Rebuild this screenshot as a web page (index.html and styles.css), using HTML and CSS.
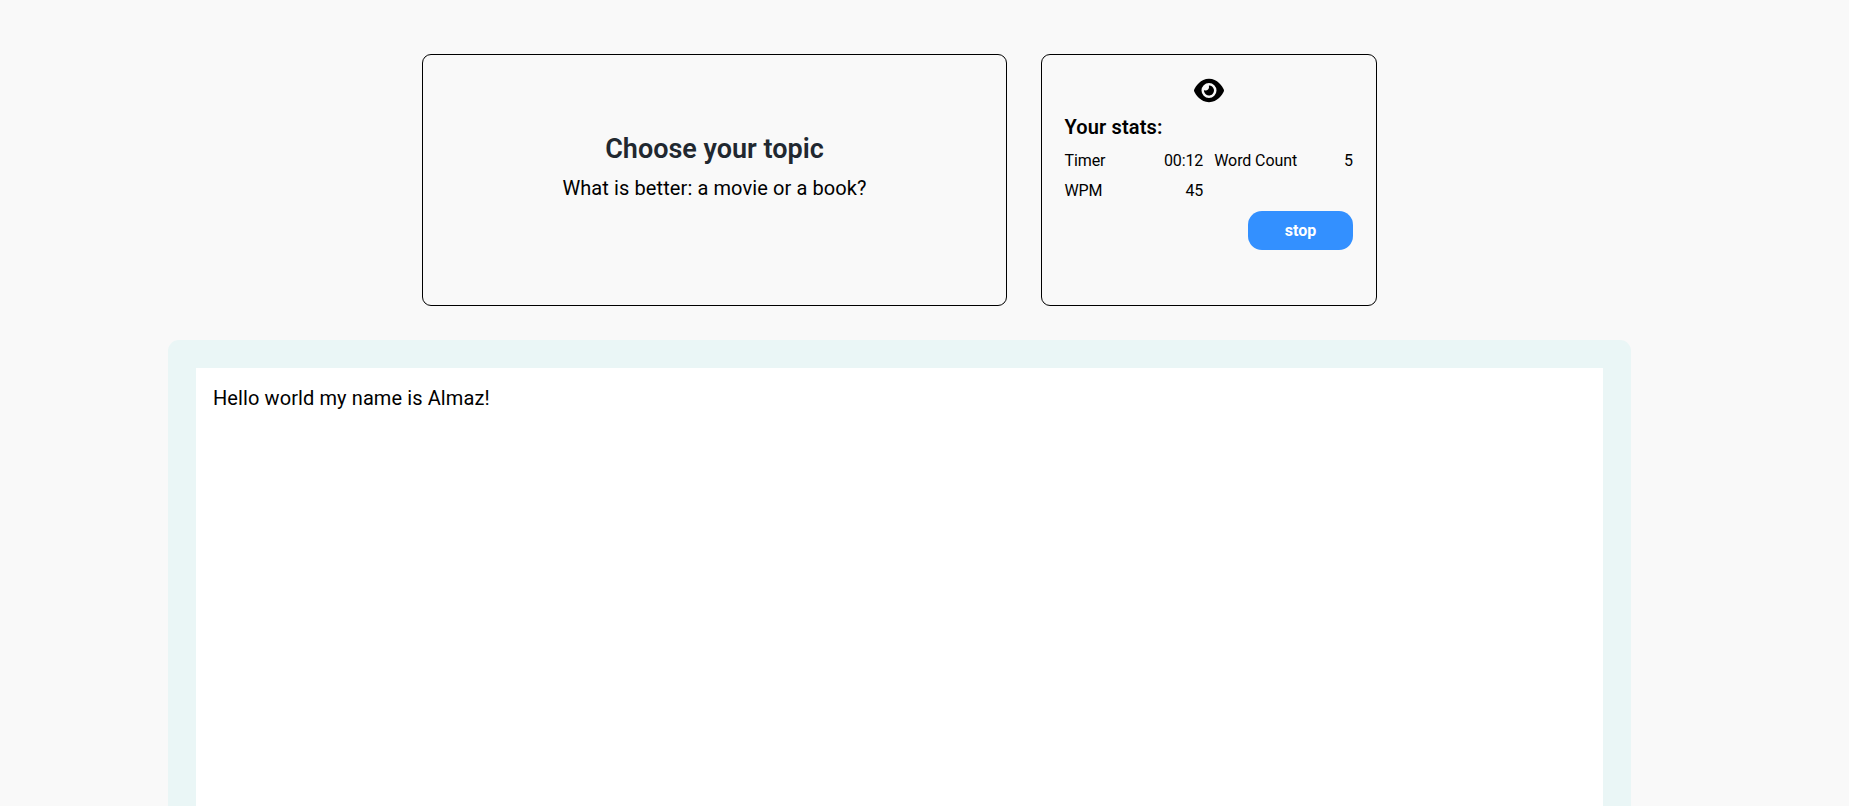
FILE: index.html
```html
<!DOCTYPE html>
<html lang="en">
<head>
<meta charset="utf-8">
<title>Writing practice</title>
<link rel="stylesheet" href="styles.css">
</head>
<body>
<main class="page">
  <div class="top">
    <section class="card topic">
      <h1 class="topic-title">Choose your topic</h1>
      <p class="topic-text">What is better: a movie or a book?</p>
    </section>
    <section class="card stats">
      <svg class="eye" viewBox="0 0 576 512" aria-hidden="true"><path d="M288 32c-80.8 0-145.5 36.800-192.600 80.600C48.600 156 17.300 208 2.500 243.700c-3.300 7.900-3.300 16.700 0 24.600C17.300 304 48.600 356 95.400 399.400C142.500 443.200 207.200 480 288 480s145.500-36.800 192.600-80.600c46.800-43.500 78.100-95.400 93-131.100c3.300-7.900 3.300-16.700 0-24.600c-14.900-35.700-46.200-87.700-93-131.100C433.500 68.800 368.800 32 288 32zM144 256a144 144 0 1 1 288 0 144 144 0 1 1-288 0zm144-64c0 35.300-28.700 64-64 64c-7.100 0-13.900-1.200-20.300-3.300c-5.500-1.800-11.900 1.600-11.700 7.400c.3 6.900 1.300 13.800 3.200 20.700c13.700 51.200 66.400 81.600 117.600 67.900s81.600-66.400 67.900-117.600c-11.100-41.500-47.800-69.400-88.600-71.100c-5.800-.2-9.200 6.100-7.400 11.700c2.100 6.400 3.300 13.200 3.300 20.300z"/></svg>
      <h2 class="stats-title">Your stats:</h2>
      <div class="stats-grid">
        <div class="stat"><span>Timer</span><span>00:12</span></div>
        <div class="stat"><span>Word Count</span><span>5</span></div>
        <div class="stat"><span>WPM</span><span>45</span></div>
      </div>
      <button class="stop" type="button">stop</button>
    </section>
  </div>
  <section class="editor">
    <div class="paper">Hello world my name is Almaz!</div>
  </section>
</main>
</body>
</html>
```
FILE: styles.css
```css
* { box-sizing: border-box; }
body {
  margin: 0;
  background: #f9f9f9;
  color: #000;
  font-family: Roboto, "Liberation Sans", sans-serif;
}
h1, h2, p { margin: 0; }
.page {
  display: flex;
  flex-direction: column;
  width: 1463px;
  height: 100vh;
  margin-left: 168px;
  padding-top: 54px;
}
.top {
  display: flex;
  justify-content: center;
  gap: 34px;
}
.card {
  height: 252px;
  border: 1px solid #000;
  border-radius: 9px;
}
.topic {
  width: 585px;
  padding-top: 77px;
  text-align: center;
}
.topic-title {
  font-size: 27px;
  line-height: 34px;
  font-weight: 600;
  color: #212830;
}
.topic-text {
  margin-top: 10px;
  font-size: 20px;
  line-height: 24px;
  letter-spacing: 0.1px;
}
.stats {
  width: 336px;
  padding: 22px 23px 0 22.5px;
  display: flex;
  flex-direction: column;
}
.eye {
  align-self: center;
  width: 30px;
  height: 27px;
}
.stats-title {
  margin-top: 11px;
  font-size: 20px;
  line-height: 24px;
  font-weight: 600;
  letter-spacing: 0.15px;
}
.stats-grid {
  display: grid;
  grid-template-columns: 1fr 1fr;
  gap: 11px;
  margin-top: 12px;
}
.stat {
  display: flex;
  justify-content: space-between;
  font-size: 16px;
  line-height: 19px;
  letter-spacing: -0.1px;
}
.stop {
  align-self: flex-end;
  width: 105px;
  height: 39px;
  margin-top: 11px;
  padding: 0;
  border: 0;
  border-radius: 14px;
  background: #3390ff;
  color: #fff;
  font: 700 16px Roboto, "Liberation Sans", sans-serif;
}
.editor {
  display: flex;
  flex: 1;
  margin-top: 34px;
  padding: 28px 28px 0;
  border-radius: 11px 11px 0 0;
  background: #eaf6f6;
}
.paper {
  flex: 1;
  padding: 18px 17px;
  background: #fff;
  font-size: 20px;
  line-height: 24px;
  letter-spacing: 0.1px;
}
```
